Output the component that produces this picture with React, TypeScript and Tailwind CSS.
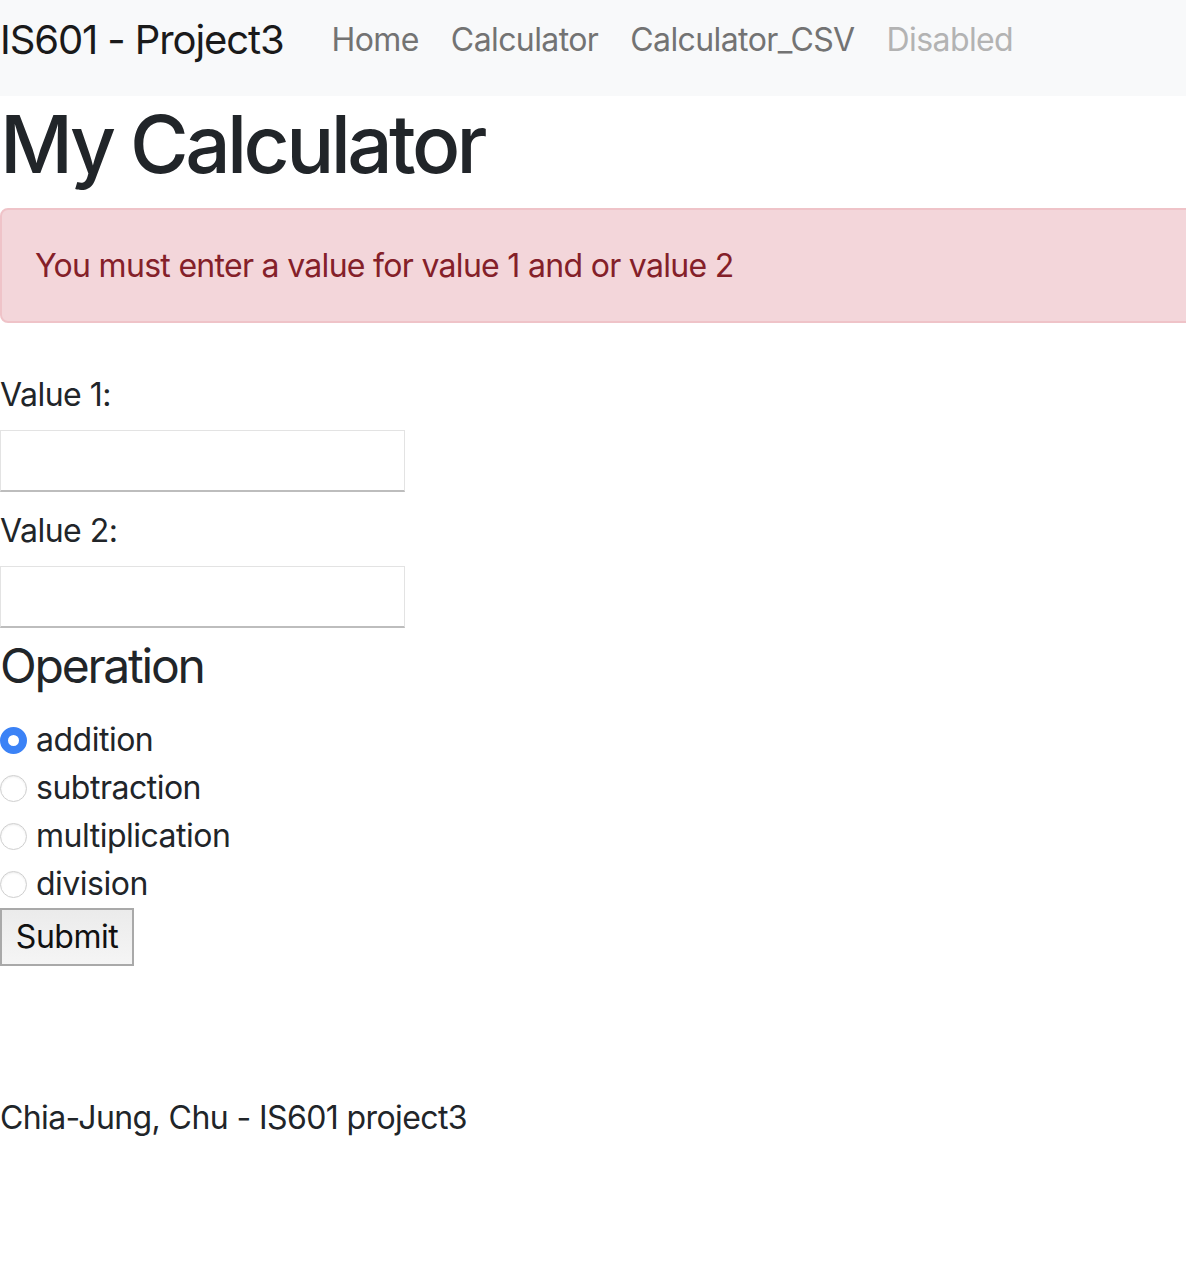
import { useState } from 'react';

const NAV_LINKS = [
  { label: 'Home', disabled: false },
  { label: 'Calculator', disabled: false },
  { label: 'Calculator_CSV', disabled: false },
  { label: 'Disabled', disabled: true },
];

const OPERATIONS = ['addition', 'subtraction', 'multiplication', 'division'];

export default function App() {
  const [op, setOp] = useState('addition');

  return (
    <div className="min-h-[1274px] overflow-x-hidden bg-white text-[#212529] font-['Inter','Liberation_Sans',sans-serif]">
      <nav className="flex items-start h-[96px] py-[8px] bg-[#f8f9fa]">
        <a className="mt-[2px] mr-[32px] text-[40px] leading-[60px] text-[#1a1a1a] tracking-[-1.1px]">IS601 - Project3</a>
        <ul className="flex">
          {NAV_LINKS.map((l) => (
            <li key={l.label}>
              <a
                className={`block px-[16px] py-[8px] text-[32px] leading-[48px] tracking-[-0.6px] ${l.disabled ? 'text-[#b3b3b3]' : 'text-[#737373]'}`}
              >
                {l.label}
              </a>
            </li>
          ))}
        </ul>
      </nav>

      <h1 className="text-[80px] leading-[96px] font-medium tracking-[-3.6px] mb-[16px]">My Calculator</h1>

      <div className="w-[calc(100%+20px)] h-[115px] flex items-center pl-[33px] rounded-[8px] border-2 border-[#efc3c8] bg-[#f3d6da] text-[#842029] text-[32px] tracking-[-0.7px]">
        You must enter a value for value 1 and or value 2
      </div>

      <form className="mt-[48px]" onSubmit={(e) => e.preventDefault()}>
        <label className="block text-[32px] leading-[48px] tracking-[-0.5px]">Value 1:</label>
        <input
          type="text"
          className="mt-[11px] block w-[405px] h-[62px] border border-[#e3e3e3] border-b-2 border-b-[#bdbdbd] outline-none"
        />
        <label className="mt-[15px] block text-[32px] leading-[48px] tracking-[-0.5px]">Value 2:</label>
        <input
          type="text"
          className="mt-[11px] block w-[405px] h-[62px] border border-[#e3e3e3] border-b-2 border-b-[#bdbdbd] outline-none"
        />

        <h3 className="mt-[9px] mb-[21px] text-[48px] leading-[58px] font-normal tracking-[-2.2px]">Operation</h3>

        {OPERATIONS.map((o) => (
          <label key={o} className="flex items-center h-[48px] text-[32px] tracking-[-0.5px]">
            <input
              type="radio"
              name="operation"
              checked={op === o}
              onChange={() => setOp(o)}
              className="appearance-none w-[27px] h-[27px] rounded-full border border-[#cfcfcf] bg-white shadow-[inset_0_1px_2px_rgba(0,0,0,0.08)] checked:border-[8px] checked:border-[#3b82f6] checked:shadow-none mr-[9px] shrink-0"
            />
            {o}
          </label>
        ))}

        <button
          type="submit"
          className="block w-[134px] h-[58px] border-2 border-[#a9a9a9] bg-gradient-to-b from-[#ebebeb] to-[#f5f5f5] text-[32px] leading-[48px] text-[#111] tracking-[-0.5px]"
        >
          Submit
        </button>
      </form>

      <footer className="mt-[128px] text-[32px] leading-[48px] tracking-[-0.6px]">Chia-Jung, Chu - IS601 project3</footer>
    </div>
  );
}
